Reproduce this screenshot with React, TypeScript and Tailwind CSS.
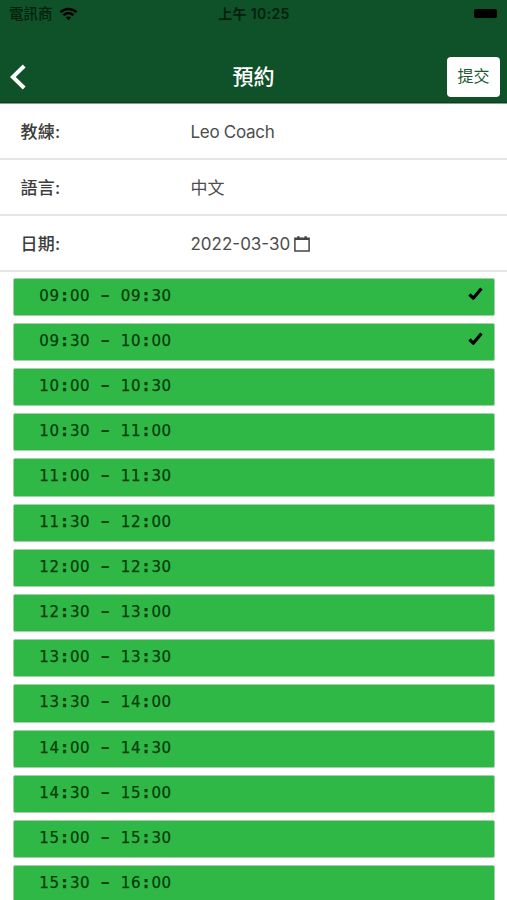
import React, { useState } from 'react';

interface Slot {
  id: number;
  label: string;
}

const pad = (n: number) => n.toString().padStart(2, '0');
const toTime = (minutes: number) => `${pad(Math.floor(minutes / 60))}:${pad(minutes % 60)}`;

// half hour slots, 09:00 to 16:00
const SLOTS: Slot[] = Array.from({ length: 14 }, (_, i) => {
  const start = 9 * 60 + i * 30;
  return { id: i, label: `${toTime(start)} - ${toTime(start + 30)}` };
});

// digits keep the regular weight, separators are heavier and wider
const charClass = (char: string) => {
  if (char === ':') return 'w-[10.2px] text-center font-bold';
  if (char === '-') return 'w-[10.2px] text-center font-bold scale-x-[1.5] scale-y-[0.8]';
  return 'w-[10.2px] text-center whitespace-pre';
};

const WifiIcon = () => (
  <svg width="19" height="14" viewBox="0 0 18 14" fill="none" stroke="#000" strokeWidth="2.5">
    <path d="M1 5.1C5.6 .8 12.4 .8 17 5.1" />
    <path d="M4 8.3c2.9-2.7 7.1-2.7 10 0" />
    <path d="M9 13.2 6.3 10.5c1.5-1.4 3.9-1.4 5.4 0z" fill="#000" stroke="none" />
  </svg>
);

const CalendarIcon = () => (
  <svg className="mb-0.5" width="16" height="16" viewBox="0 0 16 16" fill="none" stroke="#444" strokeWidth="1.5">
    <path d="M.9 2.2h14.2v12.9H.9z" />
    <path d="M1 3h14" strokeWidth="2" />
    <path d="M4.4.3v3.4M11.6.3v3.4" strokeWidth="2.4" />
  </svg>
);

const CheckIcon = () => (
  <svg width="15" height="14" viewBox="0 0 15 14" fill="none" stroke="#000" strokeWidth="3.2">
    <path d="M1.4 7.5 5.3 11.2 13.4 1.5" strokeLinejoin="round" />
  </svg>
);

const InfoRow: React.FC<{ label: string; children: React.ReactNode }> = ({ label, children }) => (
  <div className="h-[56px] flex items-center border-b-2 border-[#e6e6e6] pl-[20.5px] pt-[3px] text-[17px] text-[#4d4d4d] shrink-0">
    <div className="w-[170px] font-medium text-[#3c3c3c] tracking-[0.3px]">{label}</div>
    <div className="flex items-center gap-1">{children}</div>
  </div>
);

const SlotRow: React.FC<{ slot: Slot; selected: boolean; onToggle: () => void }> = ({ slot, selected, onToggle }) => (
  <button
    onClick={onToggle}
    className="w-full h-[38.2px] shrink-0 flex items-center justify-between bg-[#30b846] border border-[#a5cfab] rounded-[2px] pl-[25px] pr-[10.5px]"
  >
    <span className="flex items-baseline font-['DejaVu_Sans',sans-serif] text-[15px] text-[#053b0b] leading-none pb-px [-webkit-text-stroke:0.25px_#053b0b]">
      {slot.label.split('').map((char, i) => (
        <span key={i} className={charClass(char)}>{char}</span>
      ))}
    </span>
    {selected && <span className="pb-[5px]"><CheckIcon /></span>}
  </button>
);

export default function App() {
  const [selected, setSelected] = useState<number[]>([0, 1]);

  const toggle = (id: number) => {
    setSelected(prev => (prev.includes(id) ? prev.filter(s => s !== id) : [...prev, id]));
  };

  return (
    <div className="w-full h-[900px] flex flex-col bg-white overflow-hidden font-['Inter','Noto_Sans_CJK_TC',sans-serif]">
      <header className="h-[104px] shrink-0 bg-[#0f5128] border-b border-[#83a08f]">
        <div className="h-[27px] grid grid-cols-3 items-center pl-[9px] pr-[10px] text-[14px] text-[#02210c]">
          <div className="flex items-center gap-[6px]">
            <span className="font-medium text-[14.5px]">電訊商</span>
            <WifiIcon />
          </div>
          <div className="text-center font-semibold whitespace-nowrap text-[14px] tracking-[0.35px] pl-[2px]">上午 10:25</div>
          <div className="w-[23px] h-[9px] rounded-[2px] bg-black justify-self-end"></div>
        </div>
        <div className="h-[76px] grid grid-cols-3 items-center pt-[25px] pl-[10px] pr-[7px] border-b border-[#0b3e1e]">
          <button aria-label="back" className="w-4">
            <svg width="16" height="26" viewBox="0 0 16 26" fill="none" stroke="#fff" strokeWidth="4">
              <path d="M14.2 2 2.8 13 14.2 24" />
            </svg>
          </button>
          <h1 className="text-center text-white text-[21px] font-medium pr-[3px]">預約</h1>
          <button className="w-[53px] h-[40px] justify-self-end rounded-[4px] bg-white text-[#1b5b32] text-[16px] pb-[2px]">提交</button>
        </div>
      </header>
      <InfoRow label="教練:">
        <span className="tracking-[-0.3px]">Leo Coach</span>
      </InfoRow>
      <InfoRow label="語言:">中文</InfoRow>
      <InfoRow label="日期:">
        2022-03-30
        <CalendarIcon />
      </InfoRow>
      <div className="flex flex-col gap-[7.03px] pt-[5.5px] pl-[13px] pr-[12.5px]">
        {SLOTS.map(slot => (
          <SlotRow key={slot.id} slot={slot} selected={selected.includes(slot.id)} onToggle={() => toggle(slot.id)} />
        ))}
      </div>
    </div>
  );
}
